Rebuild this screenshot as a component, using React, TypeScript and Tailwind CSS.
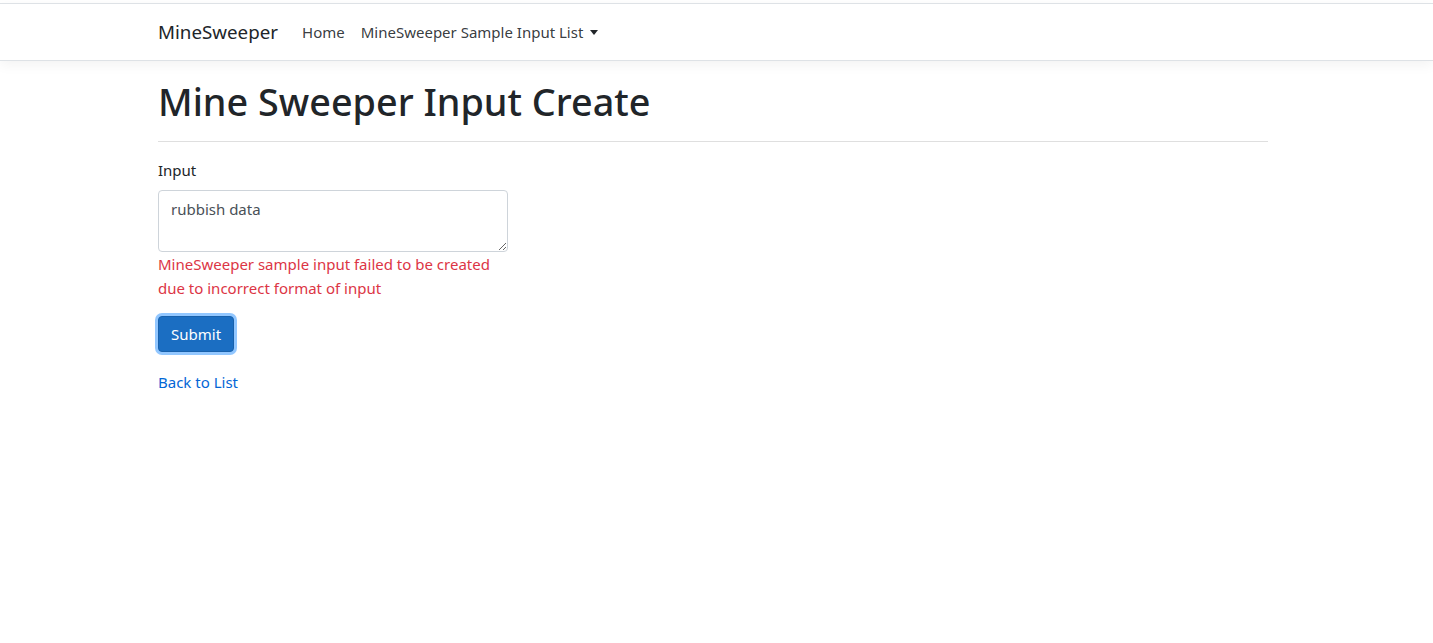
import React, { useState } from 'react';

function Navbar() {
  return (
    <div className="pt-[3px]">
      <nav className="border-t border-b border-[#dee2e6] bg-white shadow-[0_4px_12px_rgba(0,0,0,0.05)]">
        <div className="ml-[158px] flex h-[56px] items-center">
          <a className="mr-4 text-[18.75px] text-[#212529]" href="#">MineSweeper</a>
          <a className="px-2 text-[15px] text-[#212529]/90" href="#">Home</a>
          <a className="flex items-center px-2 text-[15px] text-[#212529]/90" href="#">
            MineSweeper Sample Input List
            <span className="ml-[7px] inline-block h-0 w-0 border-x-[4px] border-t-[5px] border-x-transparent border-t-[#212529]" />
          </a>
        </div>
      </nav>
    </div>
  );
}

function App() {
  const [input, setInput] = useState('rubbish data');

  return (
    <div className="min-h-screen bg-white font-['Noto_Sans',sans-serif] text-[#212529]">
      <Navbar />
      <main className="ml-[158px] w-[1110px] pt-[17px]">
        <h1 className="text-[37.75px] font-medium leading-[48px]">Mine Sweeper Input Create</h1>
        <hr className="mt-[15px] border-t border-[#dfdfdf]" />
        <form className="mt-[16px] w-[350px]" onSubmit={(e) => e.preventDefault()}>
          <label className="mb-[8px] block text-[15px] leading-[24px]">Input</label>
          <textarea
            value={input}
            onChange={(e) => setInput(e.target.value)}
            className="block h-[62px] w-[350px] rounded-[4px] border border-[#ced4da] px-[12px] py-[6px] text-[15px] leading-[24px] text-[#495057] outline-none"
          />
          <p className="text-[15px] leading-[24px] text-[#dc3545]">
            MineSweeper sample input failed to be created due to incorrect format of input
          </p>
          <button
            type="submit"
            className="mt-[16px] rounded-[4px] border border-[#1861ac] bg-[#1b6ec2] px-[12px] py-[5px] text-[15px] leading-[24px] text-white shadow-[0_0_0_3px_rgba(38,143,255,0.5)]"
          >
            Submit
          </button>
        </form>
        <div className="mt-[18px]">
          <a href="#" className="text-[15px] leading-[24px] text-[#0366d6]">Back to List</a>
        </div>
      </main>
    </div>
  );
}

export default App;
